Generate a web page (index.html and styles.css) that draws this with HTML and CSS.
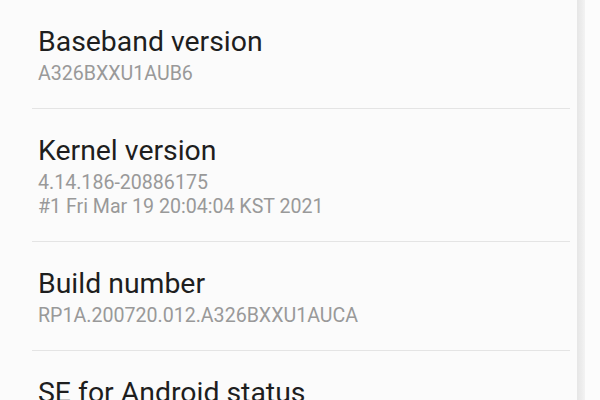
FILE: index.html
```html
<!DOCTYPE html>
<html lang="en">
<head>
  <meta charset="UTF-8">
  <meta name="viewport" content="width=device-width, initial-scale=1.0">
  <title>Software information</title>
  <link rel="stylesheet" href="styles.css">
</head>
<body>
  <div class="screen">
    <ul class="info-list">
      <li class="info-item">
        <div class="info-title">Baseband version</div>
        <div class="info-value">A326BXXU1AUB6</div>
      </li>
      <li class="info-item">
        <div class="info-title">Kernel version</div>
        <div class="info-value">4.14.186-20886175<br>#1 Fri Mar 19 20:04:04 KST 2021</div>
      </li>
      <li class="info-item">
        <div class="info-title">Build number</div>
        <div class="info-value">RP1A.200720.012.A326BXXU1AUCA</div>
      </li>
      <li class="info-item">
        <div class="info-title">SE for Android status</div>
        <div class="info-value">Enforcing</div>
      </li>
    </ul>
    <div class="scroll-track"></div>
    <div class="edge"></div>
  </div>
</body>
</html>
```

FILE: styles.css
```css
html, body {
  margin: 0;
  padding: 0;
  height: 100%;
  overflow: hidden;
}

body {
  font-family: Roboto, "Noto Sans", sans-serif;
  background: #fbfbfb;
}

.screen {
  display: grid;
  grid-template-columns: 577px 8px 1fr;
  height: 100%;
}

.info-list {
  list-style: none;
  margin: 0;
  padding: 0;
}

/* divider is inset on both sides */
.info-item {
  margin: 0 7px 0 32px;
  padding: 25px 0 22px 6px;
  border-bottom: 1px solid #e4e4e4;
}

.info-title {
  font-size: 28.4px;
  line-height: 34px;
  color: #1e1e1e;
}

.info-value {
  margin-top: 3px;
  font-size: 19.6px;
  line-height: 24px;
  color: #999;
}

.scroll-track {
  background: linear-gradient(to right, #e6e6e6, #ededed 60%, #f3f3f3);
}

.edge {
  background: #fcfcfc;
}
```
